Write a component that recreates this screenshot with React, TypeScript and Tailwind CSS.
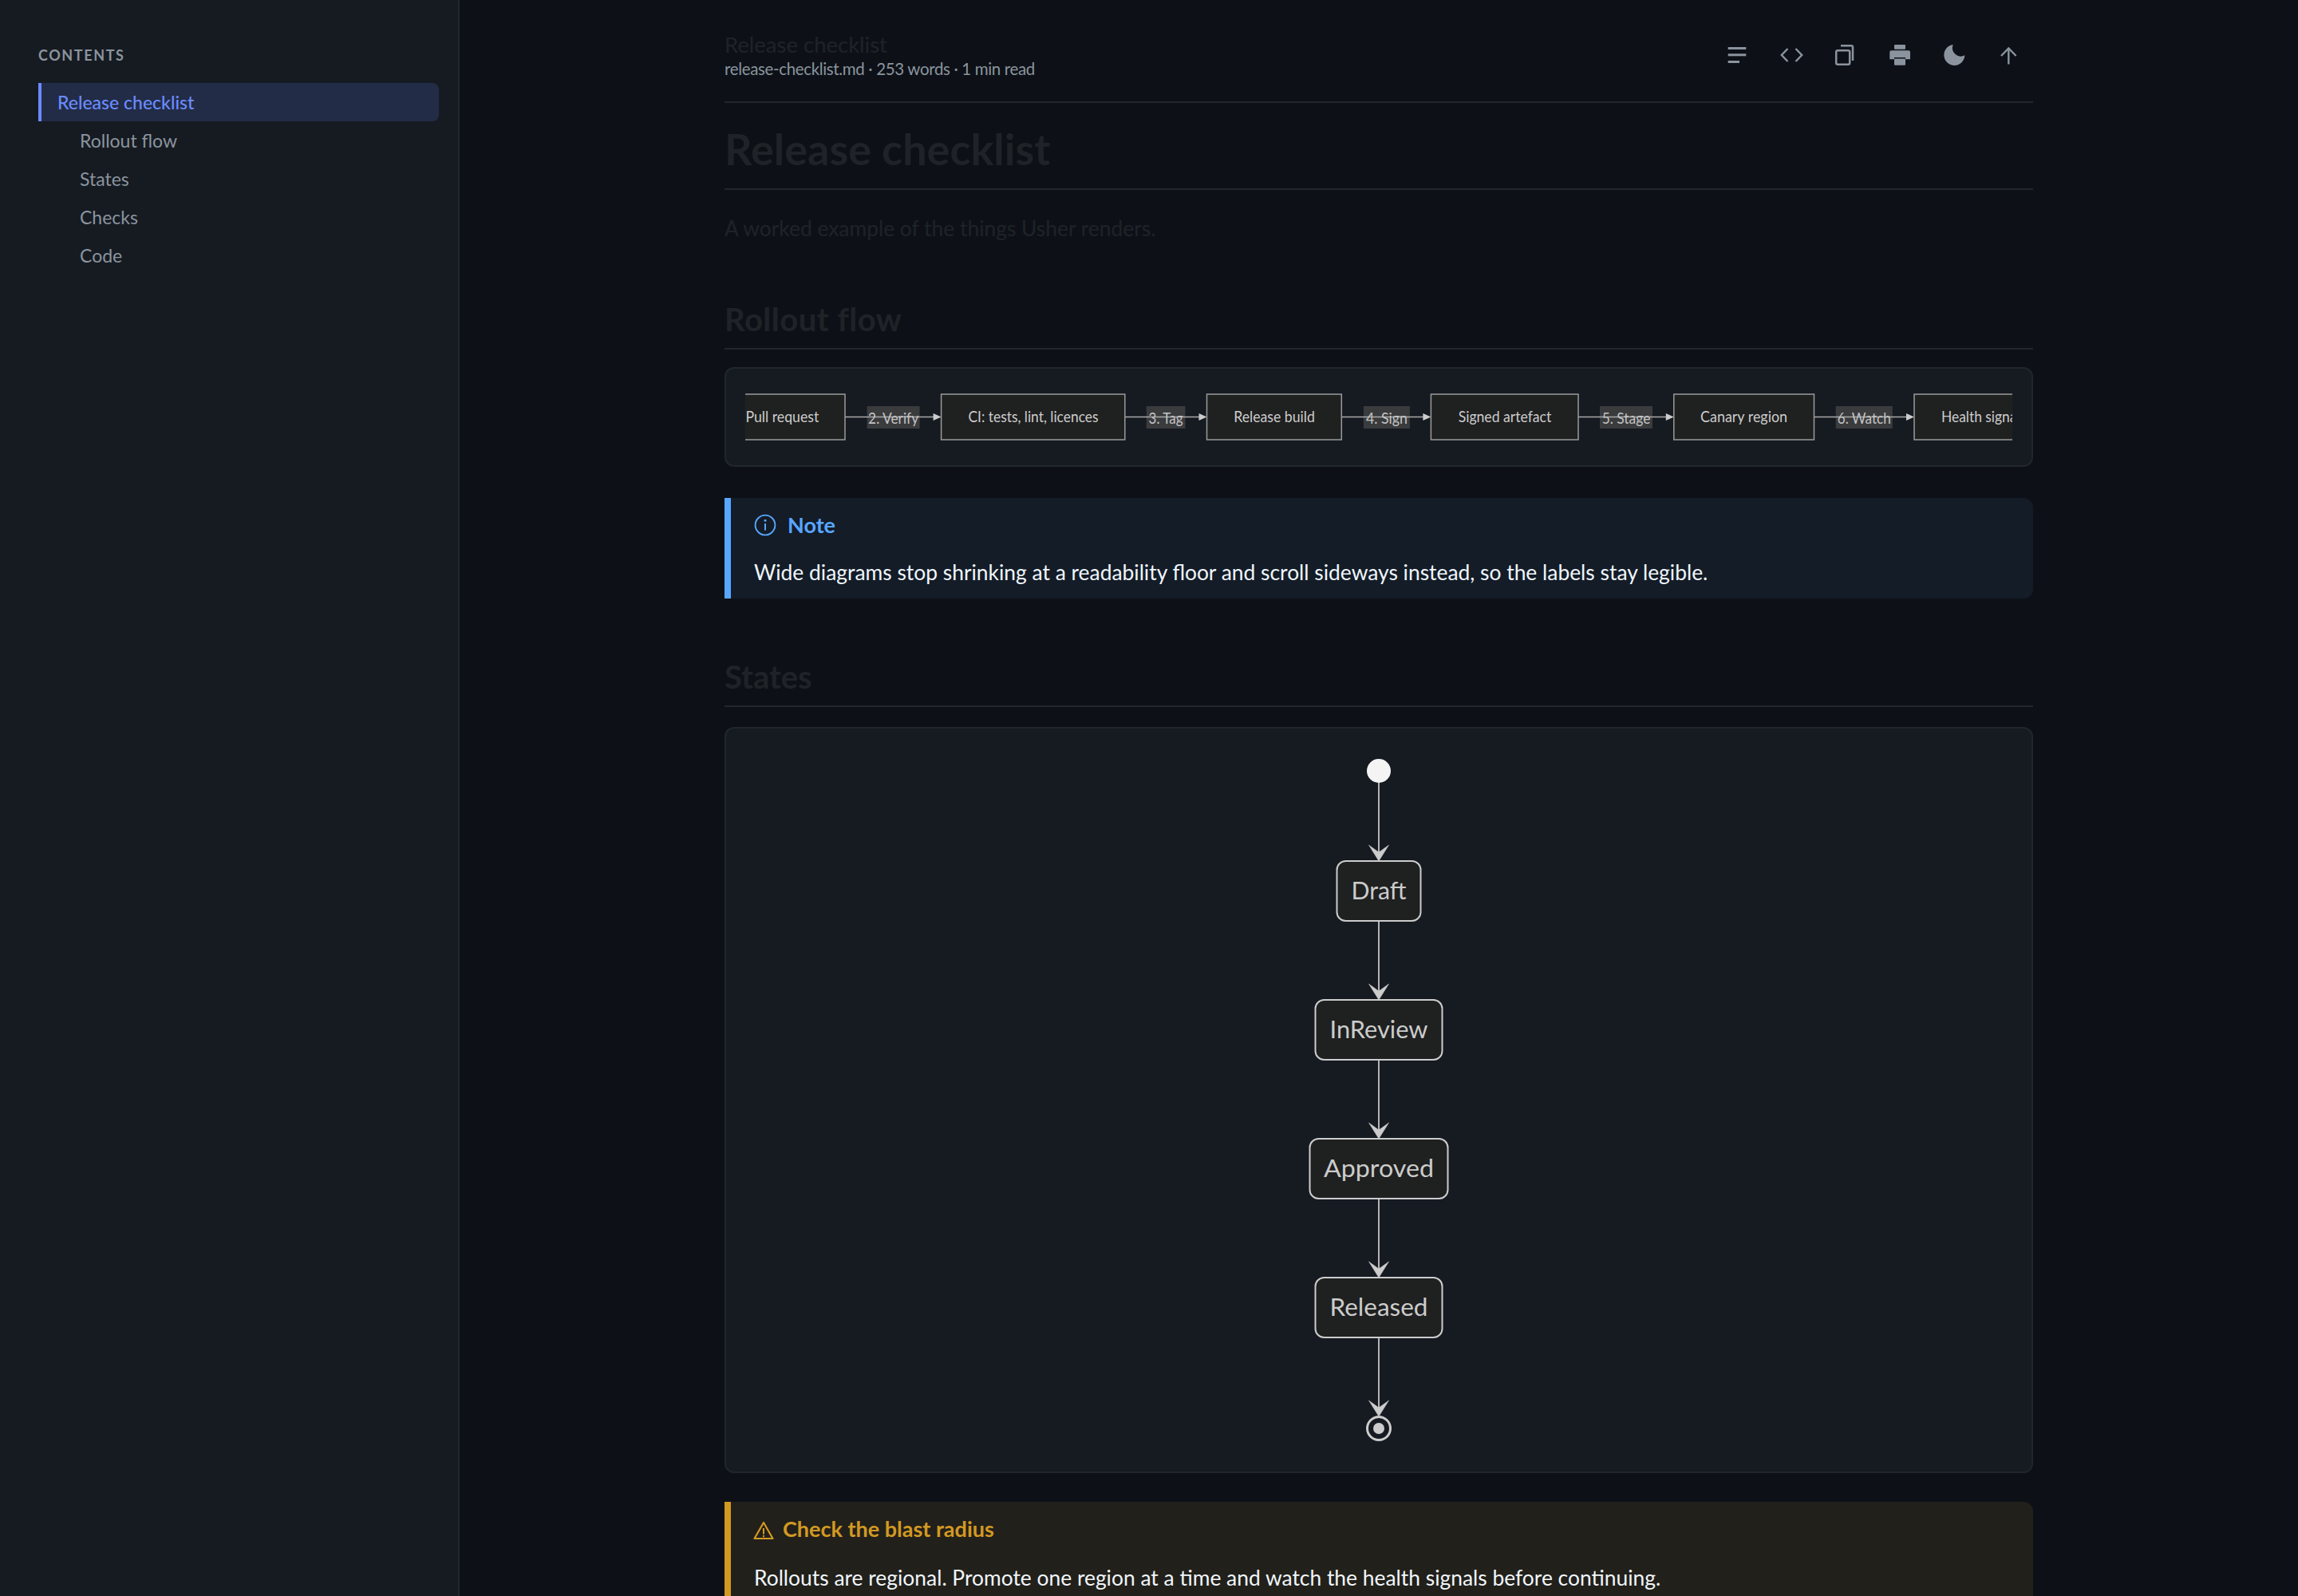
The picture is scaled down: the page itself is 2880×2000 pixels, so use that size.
import React from "react";

const Y = 36.5;
const boxes = [
  { x: -40, w: 165, label: "Pull request", tx: 46.4, tw: 92 },
  { x: 245.6, w: 230.2, label: "CI: tests, lint, licences", tx: 361, tw: 163 },
  { x: 578.5, w: 168.8, label: "Release build", tx: 663, tw: 101.6 },
  { x: 859.4, w: 184.6, label: "Signed artefact", tx: 952, tw: 116.6 },
  { x: 1163.8, w: 175.7, label: "Canary region", tx: 1251.6, tw: 109 },
  { x: 1465, w: 240, label: "Health signals", tx: 1552, tw: 106 },
];
const labels = [
  { x: 152.6, w: 66, label: "2. Verify", tw: 63 },
  { x: 502.7, w: 48.8, label: "3. Tag", tw: 43 },
  { x: 774.9, w: 58, label: "4. Sign", tw: 52 },
  { x: 1071, w: 66, label: "5. Stage", tw: 60.7 },
  { x: 1366.7, w: 71.1, label: "6. Watch", tw: 67 },
];

function RolloutDiagram() {
  return (
    <svg width="1700" height="73" viewBox="0 0 1700 73" className="block max-w-none">
      {boxes.slice(0, -1).map((b, i) => {
        const next = boxes[i + 1];
        const lab = labels[i];
        const x1 = b.x + b.w;
        const x2 = next.x;
        return (
          <g key={i}>
            <rect x={lab.x} y={23} width={lab.w} height={28} fill="#3a3b3d" />
            <line x1={x1} y1={Y} x2={x2 - 6} y2={Y} stroke="#a8a8a8" strokeWidth="1.5" />
            <polygon points={`${x2},${Y} ${x2 - 10},${Y - 4.5} ${x2 - 10},${Y + 4.5}`} fill="#cccccc" />
            <text
              x={lab.x + lab.w / 2}
              y={45}
              textAnchor="middle"
              fontSize="19"
              fill="#c4c4c4"
              textLength={lab.tw}
              lengthAdjust="spacingAndGlyphs"
            >
              {lab.label}
            </text>
          </g>
        );
      })}
      {boxes.map((b, i) => (
        <g key={i}>
          <rect x={b.x} y={8} width={b.w} height={57} fill="#1f2020" stroke="#9a9a9a" strokeWidth="1.5" />
          <text
            x={b.tx}
            y={43}
            textAnchor="middle"
            fontSize="19"
            fill="#cccccc"
            textLength={b.tw}
            lengthAdjust="spacingAndGlyphs"
          >
            {b.label}
          </text>
        </g>
      ))}
    </svg>
  );
}

const C = 794;
const states = [
  { label: "Draft", y: 142, w: 105, tw: 69 },
  { label: "InReview", y: 316, w: 159, tw: 123 },
  { label: "Approved", y: 490, w: 173, tw: 138 },
  { label: "Released", y: 664, w: 159, tw: 123 },
];

function Edge({ from, to }: { from: number; to: number }) {
  return (
    <g>
      <line x1={C} y1={from} x2={C} y2={to - 8} stroke="#b4b4b4" strokeWidth="2" />
      <polygon
        points={`${C},${to} ${C - 12.5},${to - 20} ${C},${to - 11} ${C + 12.5},${to - 20}`}
        fill="#cccccc"
        stroke="#cccccc"
        strokeWidth="0.5"
        strokeLinejoin="round"
      />
    </g>
  );
}

function StateDiagram() {
  return (
    <svg width="1588" height="883" viewBox="0 0 1588 883" className="block">
      <circle cx={C} cy={29} r={15} fill="#f4f4f4" />
      <Edge from={44} to={142} />
      <Edge from={217} to={316} />
      <Edge from={391} to={490} />
      <Edge from={565} to={664} />
      <Edge from={739} to={838} />
      {states.map((s) => (
        <g key={s.label}>
          <rect x={C - s.w / 2} y={s.y} width={s.w} height={75} rx={11} fill="#1f2020" stroke="#cccccc" strokeWidth="2" />
          <text
            x={C}
            y={s.y + 48}
            textAnchor="middle"
            fontSize="31"
            fill="#cccccc"
            textLength={s.tw}
            lengthAdjust="spacingAndGlyphs"
          >
            {s.label}
          </text>
        </g>
      ))}
      <circle cx={C} cy={853} r={14.5} fill="#161b22" stroke="#cccccc" strokeWidth="3" />
      <circle cx={C} cy={853} r={7} fill="#cccccc" />
    </svg>
  );
}

function ToolIcon({ children }: { children: React.ReactNode }) {
  return (
    <button className="flex w-[60px] h-[60px] items-center justify-center text-[#8b949e]">
      <svg width="30" height="30" viewBox="0 0 30 30" className="block">
        {children}
      </svg>
    </button>
  );
}

export default function App() {
  return (
    <div className="flex w-[2880px] h-[2000px] overflow-hidden bg-[#0d1117] font-[family-name:Lato,sans-serif]">
      <aside className="w-[576px] shrink-0 border-r-2 border-[#21262d] bg-[#161b22] pl-[48px] pr-[24px]">
        <div className="pt-[58px] h-[104px] text-[18px] leading-[22px] font-bold tracking-[1.6px] text-[#8b949e]">
          CONTENTS
        </div>
        <nav className="flex flex-col text-[23px]">
          <a className="flex h-[48px] items-center rounded-r-[8px] border-l-4 border-[#6b8cff] bg-[#222c47] pl-[20px] font-medium text-[#6b8cff]">
            Release checklist
          </a>
          {["Rollout flow", "States", "Checks", "Code"].map((t) => (
            <a key={t} className="flex h-[48px] items-center pl-[52px] text-[#8b949e]">
              {t}
            </a>
          ))}
        </nav>
      </aside>

      <main className="flex-1 min-w-0">
        <div className="mx-auto w-[1640px]">
          <header className="flex h-[129px] justify-between border-b-2 border-[#21262d]">
            <div className="pt-[38px]">
              <div className="text-[27.5px] leading-[35px] text-[#1f2328]">Release checklist</div>
              <div className="text-[20.5px] leading-[26px] tracking-[-0.35px] text-[#8b949e]">
                release-checklist.md · 253 words · 1 min read
              </div>
            </div>
            <div className="flex gap-2 pt-[9px] h-[69px] mt-[30px]">
              <ToolIcon>
                <g fill="currentColor">
                  <rect x="2.7" y="5" width="22.6" height="3" />
                  <rect x="2.7" y="13.3" width="22.6" height="3" />
                  <rect x="2.7" y="22" width="14.3" height="3" />
                </g>
              </ToolIcon>
              <ToolIcon>
                <g fill="none" stroke="currentColor" strokeWidth="2.4">
                  <path d="M9.5 7 1.8 15l7.7 8" />
                  <path d="M19.5 7l7.7 8-7.7 8" />
                </g>
              </ToolIcon>
              <ToolIcon>
                <g fill="none" stroke="currentColor" strokeWidth="2.5">
                  <rect x="2.2" y="9.2" width="17" height="17.6" rx="2" />
                  <path d="M8 3.2h13.5a1.5 1.5 0 0 1 1.5 1.5V22" />
                </g>
              </ToolIcon>
              <ToolIcon>
                <g fill="currentColor">
                  <rect x="7" y="2" width="14" height="5.7" rx="1" />
                  <path d="M3.3 9.3h21.7a2 2 0 0 1 2 2v9H21V18H7v2.3H1.3v-9a2 2 0 0 1 2-2z" />
                  <rect x="7" y="19.5" width="14" height="8.2" rx="1" />
                </g>
              </ToolIcon>
              <ToolIcon>
                <path d="M12.7 2A13 13 0 1 0 27.3 15.3 10.5 10.5 0 0 1 12.7 2Z" fill="currentColor" />
              </ToolIcon>
              <ToolIcon>
                <g fill="none" stroke="currentColor" strokeWidth="2.4">
                  <path d="M14.3 6v20.5" />
                  <path d="M5 16 14.3 6.5 23.6 16" />
                </g>
              </ToolIcon>
            </div>
          </header>

          <h1 className="mt-[23px] border-b-2 border-[#21262d] pb-[14px] text-[54px] leading-[70px] font-bold text-[#1f2328]">
            Release checklist
          </h1>
          <p className="mt-[28px] text-[26.4px] leading-[40px] text-[#1f2328]">
            A worked example of the things Usher renders.
          </p>

          <h2 className="mt-[68px] border-b-2 border-[#21262d] pb-[9px] text-[40px] leading-[53px] font-bold tracking-[0.5px] text-[#1f2328]">
            Rollout flow
          </h2>
          <div className="mt-[22px] rounded-[12px] border-2 border-[#21262d] bg-[#161b22] p-[24px]">
            <div className="h-[73px] overflow-hidden">
              <RolloutDiagram />
            </div>
          </div>

          <div className="mt-[39px] h-[126px] rounded-r-[12px] border-l-8 border-[#58a6ff] bg-[#131c27] pl-[29px] pt-[16px]">
            <div className="flex h-[36px] items-center gap-[14px] text-[27px] font-bold text-[#58a6ff]">
              <svg width="28" height="28" viewBox="0 0 28 28" className="block shrink-0">
                <circle cx="14" cy="14" r="12.4" fill="none" stroke="currentColor" strokeWidth="1.9" />
                <circle cx="14" cy="8.3" r="1.5" fill="currentColor" />
                <path d="M14 12v8.5" stroke="currentColor" strokeWidth="2" />
              </svg>
              <span>Note</span>
            </div>
            <p className="mt-[21px] text-[26.4px] leading-[40px] text-[#f0f6fc]">
              Wide diagrams stop shrinking at a readability floor and scroll sideways instead, so the labels stay legible.
            </p>
          </div>

          <h2 className="mt-[72px] border-b-2 border-[#21262d] pb-[9px] text-[40px] leading-[53px] font-bold text-[#1f2328]">
            States
          </h2>
          <div className="mt-[25px] rounded-[12px] border-2 border-[#21262d] bg-[#161b22] p-[24px]">
            <StateDiagram />
          </div>

          <div className="mt-[36px] rounded-r-[12px] border-l-8 border-[#d29922] bg-[#22201a] pl-[28px] pt-[16px] pb-[16px]">
            <div className="flex h-[36px] items-center gap-[11px] text-[27px] font-bold text-[#d29922]">
              <svg width="26" height="24" viewBox="0 0 26 24" className="block shrink-0 mt-[3px]">
                <path d="M13 2 24.5 22H1.5Z" fill="none" stroke="currentColor" strokeWidth="2.2" strokeLinejoin="round" />
                <path d="M13 9v7.5" stroke="currentColor" strokeWidth="2" />
                <circle cx="13" cy="19" r="1.2" fill="currentColor" />
              </svg>
              <span>Check the blast radius</span>
            </div>
            <p className="mt-[23px] pl-[1px] text-[26.4px] leading-[40px] text-[#f0f6fc]">
              Rollouts are regional. Promote one region at a time and watch the health signals before continuing.
            </p>
          </div>
        </div>
      </main>
    </div>
  );
}
